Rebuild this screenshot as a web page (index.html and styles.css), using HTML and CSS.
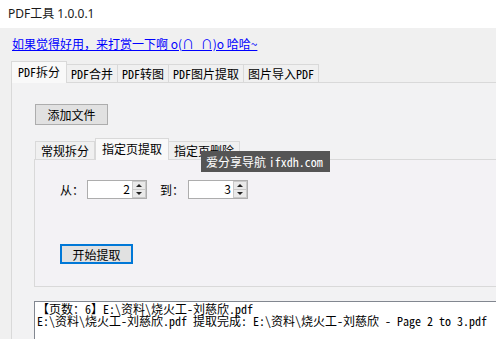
FILE: index.html
```html
<!DOCTYPE html>
<html lang="zh">
<head>
  <meta charset="UTF-8" />
  <title>PDF工具 1.0.0.1</title>
  <link rel="stylesheet" href="styles.css">
</head>
<body>
  <div class="titlebar">PDF工具 1.0.0.1</div>

  <div class="window">
    <a class="donate" href="#">如果觉得好用，来打赏一下啊 o(∩_∩)o 哈哈~</a>

    <div class="tabs outer">
      <ul class="tab-row">
        <li class="tab active">PDF拆分</li>
        <li class="tab">PDF合并</li>
        <li class="tab">PDF转图</li>
        <li class="tab">PDF图片提取</li>
        <li class="tab">图片导入PDF</li>
      </ul>
      <div class="tab-panel">
        <button class="btn add">添加文件</button>

        <div class="tabs inner">
          <ul class="tab-row">
            <li class="tab">常规拆分</li>
            <li class="tab active">指定页提取</li>
            <li class="tab">指定页删除</li>
          </ul>
          <div class="tab-panel">
            <div class="range-row">
              <label>从：</label>
              <div class="spin">
                <span class="val">2</span>
                <span class="arrows"><i class="up"></i><i class="down"></i></span>
              </div>
              <label class="to">到：</label>
              <div class="spin">
                <span class="val">3</span>
                <span class="arrows"><i class="up"></i><i class="down"></i></span>
              </div>
            </div>
            <button class="btn primary">开始提取</button>
          </div>
          <div class="tip">爱分享导航 <span class="mono">ifxdh.com</span></div>
        </div>

        <div class="log">
          <div>【页数：6】E:\资料\烧火工-刘慈欣.pdf</div>
          <div>E:\资料\烧火工-刘慈欣.pdf 提取完成: E:\资料\烧火工-刘慈欣 - Page 2 to 3.pdf</div>
        </div>
      </div>
    </div>
  </div>
</body>
</html>
```

FILE: styles.css
```css
* { margin: 0; padding: 0; box-sizing: border-box; }
html,
body {
  height: 100%;
  overflow: hidden;
  background: #f0f0f0;
  font-family: "Noto Sans CJK SC", sans-serif;
  font-size: 12px;
  color: #000;
}

.mono,
.tab,
.log {
  font-family: "Noto Sans Mono CJK SC", "Liberation Mono", "Noto Sans CJK SC", monospace;
}

.titlebar {
  height: 28px;
  line-height: 28px;
  padding-left: 8px;
  background: #fff;
  font-family: "Noto Sans", "Noto Sans CJK SC", sans-serif;
  font-size: 12px;
  color: #1a1a1a;
}

.window {
  padding-top: 7px;
  height: calc(100% - 28px);
  overflow: hidden;
}

.donate {
  display: inline-block;
  margin-left: 12px;
  line-height: 16px;
  color: #0000ff;
  text-decoration: underline;
}

/* tab controls */
.tab-row {
  display: flex;
  align-items: flex-end;
  list-style: none;
  height: 21px;
}
.tab {
  height: 18px;
  line-height: 17px;
  padding: 0 4px;
  border: 1px solid #d9d9d9;
  border-bottom: none;
  border-left: none;
  background: #f0f0f0;
  white-space: nowrap;
}
.tab:first-child { border-left: 1px solid #d9d9d9; }
.tab.active {
  height: 22px;
  line-height: 19px;
  padding: 0 6px;
  margin-bottom: -1px;
  border-left: 1px solid #d9d9d9;
  background: #f9f9f9;
  position: relative;
}
.tab.active + .tab { border-left: none; }

.tabs.outer {
  margin-top: 9px;
  margin-left: 11px;
}
.tabs.outer > .tab-panel {
  border: 1px solid #d9d9d9;
  border-right: none;
  border-bottom: none;
  background: #f2f2f3;
  padding: 21px 0 0 22px;
  height: 258px;
}

.tabs.inner {
  position: relative;
  margin-top: 13px;
}
.tabs.inner > .tab-row { padding-left: 1px; }
.tabs.inner .tab { padding: 0 5px; }
.tabs.inner .tab.active { padding: 0 6px; }
.tabs.inner > .tab-panel {
  height: 128px;
  border: 1px solid #d9d9d9;
  border-right: none;
  background: #f3f2f5;
  padding: 20px 0 0 25px;
}

/* buttons */
.btn {
  display: block;
  width: 73px;
  height: 21px;
  background: #e1e1e1;
  border: 1px solid #adadad;
  font-family: "Noto Sans CJK SC", sans-serif;
  font-size: 12px;
  color: #000;
}
.btn.add { margin-left: 1px; }
.btn.primary {
  height: 20px;
  margin-top: 45px;
  border: 1px solid #0078d7;
  box-shadow: inset 0 0 0 1px #0078d7;
}

/* range inputs */
.range-row {
  display: flex;
  align-items: center;
  height: 19px;
}
.range-row label { width: 27px; }
.range-row label.to { margin-left: 13px; width: 28px; }
.spin {
  display: flex;
  width: 60px;
  height: 19px;
  background: #fff;
  border: 1px solid #adadad;
}
.spin .val {
  flex: 1;
  text-align: right;
  line-height: 16px;
  padding-right: 2px;
}
.spin .arrows {
  display: flex;
  flex-direction: column;
  width: 14px;
}
.spin i {
  flex: 1;
  background: #e9e9e9;
  border: 1px solid #c9c9c9;
  position: relative;
}
.spin i + i { border-top: none; }
.spin i::after {
  content: "";
  position: absolute;
  left: 3px;
  top: 2px;
  border-left: 3px solid transparent;
  border-right: 3px solid transparent;
}
.spin i.up::after { border-bottom: 3px solid #222; }
.spin i.down::after { border-top: 3px solid #222; top: 2px; }

/* watermark overlay */
.tip {
  position: absolute;
  left: 167px;
  top: 13px;
  width: 129px;
  height: 21px;
  line-height: 21px;
  padding-left: 5px;
  background: #555;
  color: #fff;
  font-size: 12px;
  white-space: nowrap;
}

/* output log */
.log {
  margin-top: 14px;
  height: 40px;
  background: #fff;
  border-top: 1px solid #828790;
  border-left: 1px solid #828790;
  padding: 1px 0 0 2px;
  line-height: 12px;
  font-size: 12px;
  white-space: nowrap;
  overflow: hidden;
}
```
